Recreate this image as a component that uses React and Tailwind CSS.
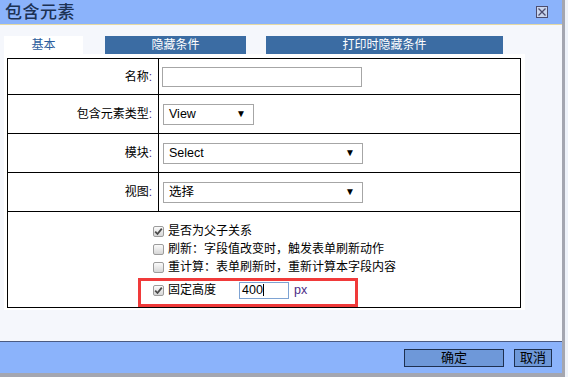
import React from "react";

const FONT = { fontFamily: '"Liberation Sans", "Noto Sans CJK SC", sans-serif' };

function Label({ text }) {
  return (
    <div className="w-[151px] h-full border-r border-black flex items-center justify-end pr-[6px] text-[12px] text-black">
      {text}
      <span className="text-[#4b2a86]">:</span>
    </div>
  );
}

function Select({ value, w }) {
  return (
    <div
      className={`${w} h-[21px] border border-[#a6a6a6] bg-white flex items-center justify-between pl-[5px] pr-[7px] text-[12.5px] text-black`}
    >
      <span>{value}</span>
      <span className="text-[10px] leading-none">▼</span>
    </div>
  );
}

function Check({ checked }) {
  return (
    <span className="w-[11px] h-[11px] rounded-[2px] border border-[#9c9c9c] bg-gradient-to-b from-[#fbfbfb] to-[#d6d6d6] flex items-center justify-center shrink-0">
      {checked && (
        <svg width="9" height="9" viewBox="0 0 9 9">
          <path d="M1.2 4.6 L3.5 7 L7.8 1.6" fill="none" stroke="#4a4a4a" strokeWidth="1.8" />
        </svg>
      )}
    </span>
  );
}

function CheckRow({ checked, text, className = "" }) {
  return (
    <div className={`flex items-center gap-[4px] h-[18px] text-[12px] text-black ${className}`}>
      <Check checked={checked} />
      <span>{text}</span>
    </div>
  );
}

export default function App() {
  return (
    <div className="w-[568px] h-[377px] flex bg-[#eef2f9] overflow-hidden" style={FONT}>
      <div className="w-[565px] h-[377px] flex flex-col border-r-[3px] border-b-[4px] border-[#a4a6b0]">
        {/* title bar */}
        <div className="h-[25px] shrink-0 bg-[#8bb3fb] border-b border-[#e4d9a4] flex items-center justify-between pl-[5px] pr-[14px]">
          <span className="text-[17px] leading-none text-[#1c3254] font-medium tracking-[0.5px]">包含元素</span>
          <span className="w-[12px] h-[12px] border border-[#4c4c6e] bg-[#c9d5ee] flex items-center justify-center">
            <svg width="8" height="8" viewBox="0 0 8 8">
              <path d="M0.5 0.5 L7.5 7.5 M7.5 0.5 L0.5 7.5" stroke="#4c4c6e" strokeWidth="1.3" />
            </svg>
          </span>
        </div>

        {/* body */}
        <div className="flex-1 bg-[#f5f7fc] pl-[4px] flex flex-col">
          <div className="mt-[11px] h-[18px] flex text-[12px]">
            <div className="w-[79px] bg-white text-[#2c5d9c] flex items-center justify-center">基本</div>
            <div className="ml-[22px] w-[141px] bg-[#3b6ca3] text-white flex items-center justify-center">隐藏条件</div>
            <div className="ml-[20px] w-[237px] bg-[#3b6ca3] text-white flex items-center justify-center">打印时隐藏条件</div>
          </div>

          <div className="w-[521px] h-[256px] bg-white pt-[4px] pl-[3px]">
            <div className="w-[514px] h-[250px] border border-black flex flex-col">
              <div className="h-[36px] border-b border-black flex items-center">
                <Label text="名称" />
                <div className="pl-[3px]">
                  <div className="w-[200px] h-[20px] border border-[#a6a6a6] bg-white" />
                </div>
              </div>
              <div className="h-[39px] border-b border-black flex items-center">
                <Label text="包含元素类型" />
                <div className="pl-[4px]">
                  <Select value="View" w="w-[91px]" />
                </div>
              </div>
              <div className="h-[39px] border-b border-black flex items-center">
                <Label text="模块" />
                <div className="pl-[4px]">
                  <Select value="Select" w="w-[200px]" />
                </div>
              </div>
              <div className="h-[39px] border-b border-black flex items-center">
                <Label text="视图" />
                <div className="pl-[4px]">
                  <Select value="选择" w="w-[200px]" />
                </div>
              </div>
              <div className="relative flex-1 pl-[145px] pt-[10px] flex flex-col">
                <CheckRow checked text="是否为父子关系" />
                <CheckRow text="刷新：字段值改变时，触发表单刷新动作" />
                <CheckRow text="重计算：表单刷新时，重新计算本字段内容" />
                <div className="mt-[4px] h-[20px] flex items-center text-[12px] text-black">
                  <Check checked />
                  <span className="ml-[4px] w-[71px]">固定高度</span>
                  <div className="w-[50px] h-[17px] border border-[#7ea3d3] bg-white flex items-center pl-[2px] text-[12.5px] leading-none">
                    400<span className="w-px h-[12px] bg-black" />
                  </div>
                  <span className="ml-[5px] text-[12.5px] text-[#4b2a86]">px</span>
                </div>
                <div className="absolute left-[130px] top-[66px] w-[220px] h-[29px] border-[3px] border-[#f03a3a]" />
              </div>
            </div>
          </div>
        </div>

        {/* footer */}
        <div className="h-[32px] shrink-0 bg-[#8bb3fb] border-t border-[#4a5a82] flex items-center justify-end pr-[10px] gap-[10px] text-[13px] text-black">
          <div className="w-[100px] h-[18px] bg-[#6e98d9] border border-[#1e3050] flex items-center justify-center">确定</div>
          <div className="w-[38px] h-[18px] bg-[#6e98d9] border border-[#1e3050] flex items-center justify-center">取消</div>
        </div>
      </div>
    </div>
  );
}
